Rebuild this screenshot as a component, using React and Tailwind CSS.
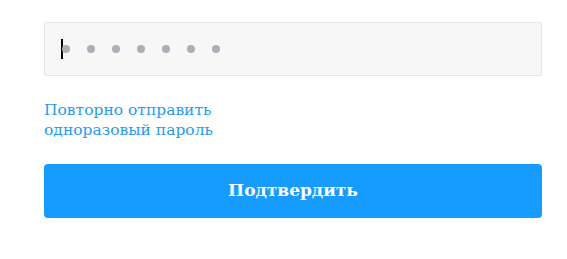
const DOTS = 7;

const OtpField = () => {
  return (
    <div className="h-[54px] w-full border border-[#e6e6e6] bg-[#f7f7f7] rounded-[2px] flex items-center pl-[16px]">
      {/* курсор */}
      <span className="w-[2px] h-[20px] bg-black mr-[-1px]" />
      <div className="flex items-center gap-[17px]">
        {Array.from({ length: DOTS }).map((_, i) => (
          <span key={i} className="w-[8px] h-[8px] rounded-full bg-[#aab0b8]" />
        ))}
      </div>
    </div>
  );
};

export default function App() {
  return (
    <div
      className="w-[567px] h-[259px] bg-white pl-[44px] pr-[25px] pt-[22px]"
      style={{ fontFamily: '"DejaVu Serif", "Liberation Serif", serif' }}
    >
      <OtpField />

      {/* повторная отправка */}
      <button className="block text-left mt-[24px] text-[15.5px] leading-[20px] text-[#2a9be8]">
        Повторно отправить
        <br />
        одноразовый пароль
      </button>

      <button className="mt-[24px] w-full h-[54px] rounded-[4px] bg-[#169bff] text-white font-bold text-[17px] flex items-center justify-center">
        Подтвердить
      </button>
    </div>
  );
}
